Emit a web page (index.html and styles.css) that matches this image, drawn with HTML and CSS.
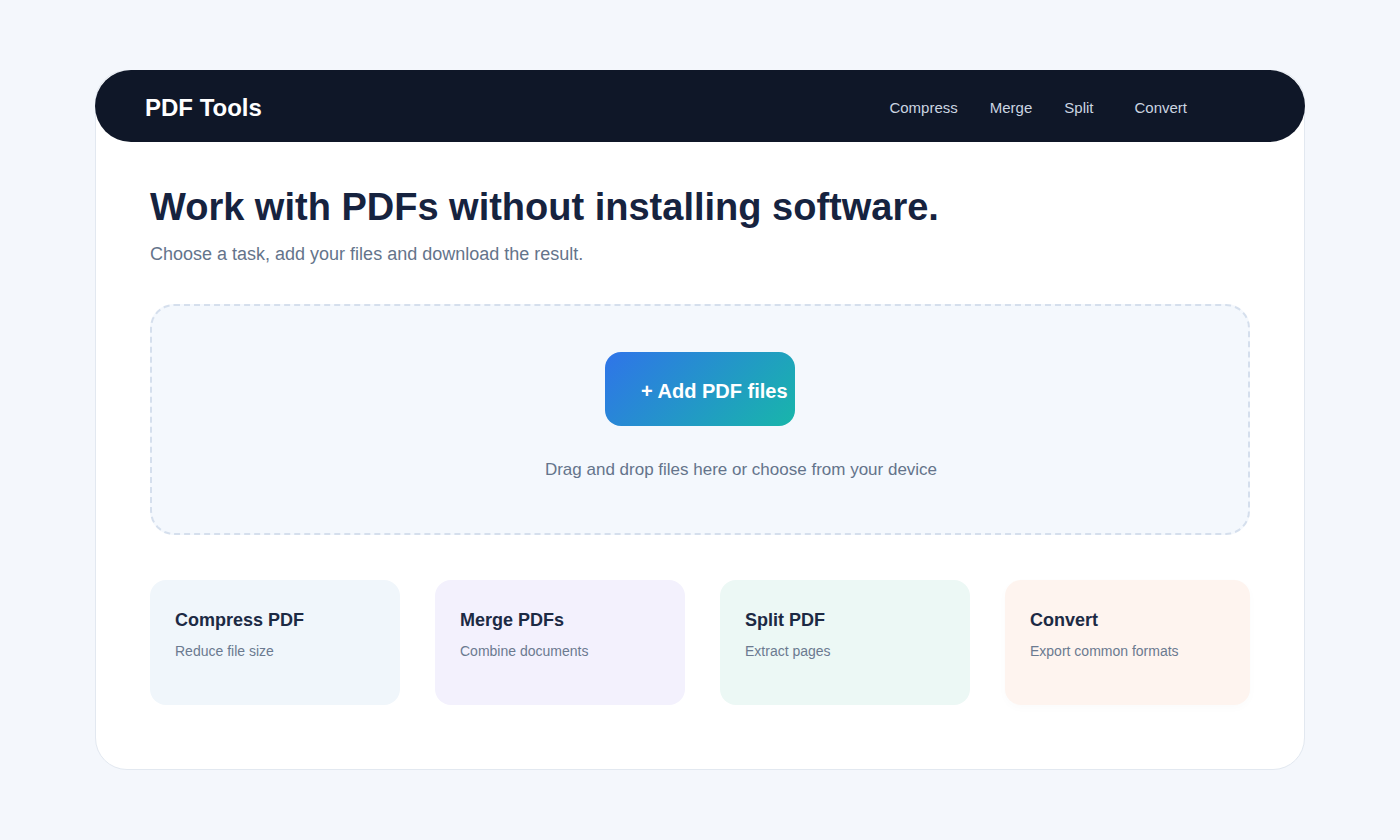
FILE: index.html
```html
<!DOCTYPE html>
<html lang="en">
<head>
<meta charset="UTF-8" />
<meta name="viewport" content="width=device-width, initial-scale=1" />
<title>PDF Tools</title>
<link rel="stylesheet" href="styles.css">
</head>
<body>
  <div class="app">
    <header class="topbar">
      <div class="logo">PDF Tools</div>
      <nav class="nav">
        <a href="#">Compress</a>
        <a href="#">Merge</a>
        <a href="#">Split</a>
        <a href="#" class="nav-last">Convert</a>
      </nav>
    </header>

    <main class="content">
      <h1>Work with PDFs without installing software.</h1>
      <p class="lead">Choose a task, add your files and download the result.</p>

      <div class="dropzone">
        <button class="add-btn">+ Add PDF files</button>
        <p class="drop-hint">Drag and drop files here or choose from your device</p>
      </div>

      <div class="tools">
        <div class="tool tool-blue">
          <h3>Compress PDF</h3>
          <p>Reduce file size</p>
        </div>
        <div class="tool tool-violet">
          <h3>Merge PDFs</h3>
          <p>Combine documents</p>
        </div>
        <div class="tool tool-green">
          <h3>Split PDF</h3>
          <p>Extract pages</p>
        </div>
        <div class="tool tool-peach">
          <h3>Convert</h3>
          <p>Export common formats</p>
        </div>
      </div>
    </main>
  </div>
</body>
</html>
```

FILE: styles.css
```css
body {
  margin: 0;
  background: #f4f7fc;
  font-family: "Liberation Sans", Arial, sans-serif;
  color: #172440;
}

.app {
  width: 1210px;
  box-sizing: border-box;
  margin: 70px 0 0 95px;
  background: #fff;
  border: 1px solid #e2e8f0;
  border-radius: 32px;
  height: 700px;
}

/* header */
.topbar {
  height: 72px;
  margin: -1px -1px 0;
  background: #0f1728;
  border-radius: 36px;
  display: flex;
  align-items: center;
  justify-content: space-between;
  padding: 0 50px;
}

.logo {
  color: #fff;
  font-size: 24px;
  font-weight: 700;
  padding-top: 3px;
}

.nav {
  display: flex;
  gap: 32px;
  margin-right: 68px;
  padding-top: 2px;
}

.nav a {
  color: #cbd5e1;
  font-size: 15px;
  text-decoration: none;
}

.nav .nav-last {
  margin-left: 9px;
}

/* main */
.content {
  padding: 41px 54px 0;
}

h1 {
  margin: 0;
  font-size: 38px;
  line-height: 48px;
  font-weight: 700;
  color: #16233f;
}

.lead {
  margin: 10px 0 0;
  font-size: 18px;
  line-height: 27px;
  color: #64748b;
}

.dropzone {
  margin-top: 36px;
  height: 231px;
  box-sizing: border-box;
  border: 2px dashed #d5dfed;
  border-radius: 24px;
  background: #f4f8fd;
  padding-top: 46px;
  display: flex;
  flex-direction: column;
  align-items: center;
}

.add-btn {
  width: 190px;
  height: 74px;
  border: 0;
  border-radius: 16px;
  background: linear-gradient(135deg, #2f74e9, #18b6aa);
  color: #fff;
  font-family: inherit;
  font-size: 20px;
  font-weight: 700;
  text-align: left;
  padding: 4px 0 0 36px;
  white-space: nowrap;
}

.drop-hint {
  margin: 31px 0 0;
  padding-left: 82px;
  font-size: 17px;
  line-height: 26px;
  color: #64748b;
}

/* tool cards */
.tools {
  margin-top: 45px;
  display: grid;
  grid-template-columns: 250px 250px 250px 245px;
  gap: 35px;
}

.tool {
  height: 125px;
  box-sizing: border-box;
  border-radius: 16px;
  padding: 29px 25px 0;
}

.tool h3 {
  margin: 0;
  font-size: 18px;
  line-height: 22px;
  font-weight: 700;
  color: #1c2a44;
}

.tool p {
  margin: 11px 0 0;
  font-size: 14px;
  line-height: 18px;
  color: #6b7a90;
}

.tool-blue { background: #f0f6fb; }
.tool-violet { background: #f3f1fd; }
.tool-green { background: #ecf8f5; }
.tool-peach {
  background: #fef4ef;
  box-shadow: 0 3px 10px rgba(15, 23, 40, 0.02);
}
```
